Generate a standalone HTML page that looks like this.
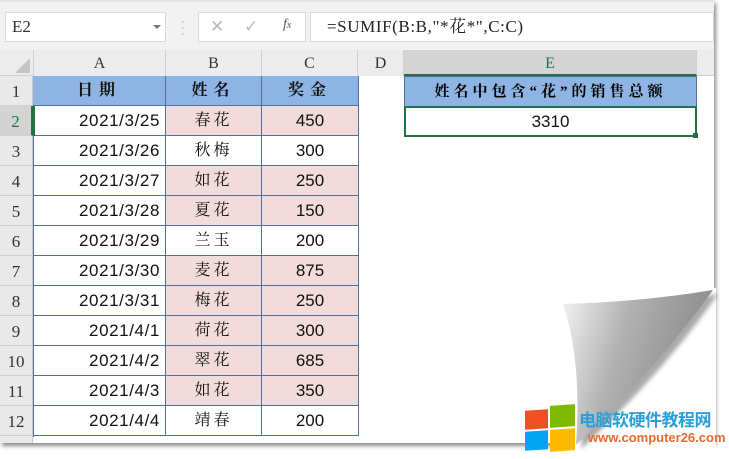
<!DOCTYPE html>
<html><head><meta charset="utf-8"><style>
*{margin:0;padding:0;box-sizing:border-box}
body{width:729px;height:459px;background:#fff;position:relative;overflow:hidden;font-family:"Liberation Sans",sans-serif}
.a{position:absolute}
.cjk{font-family:"Liberation Serif","Noto Serif CJK SC",serif}
.cell{position:absolute;height:30px;line-height:30px;font-size:16px;color:#111;border-right:1px solid #4f6f9f;border-bottom:1px solid #4f6f9f}
.rh{position:absolute;left:0;width:33px;height:30px;background:#e9e9e9;border-bottom:1px solid #d0d0d0;border-right:1px solid #c8c8c8;font-family:"Liberation Serif",serif;font-size:17px;color:#333;text-align:center;padding-top:6px}
.ch{position:absolute;top:50px;height:26px;background:#ececec;border-right:1px solid #d0d0d0;font-family:"Liberation Serif",serif;font-size:16px;color:#333;text-align:center;line-height:28px}
</style></head><body>
<div class="a" style="left:0;top:0;width:714px;height:443px;background:#fff;box-shadow:2px 3px 4px rgba(0,0,0,.45)"></div>
<div class="a" style="left:0;top:0;width:714px;height:50px;background:#f2f2f2;border-top:2px solid #e4e4e4"></div>
<div class="a" style="left:5px;top:12px;width:161px;height:30px;background:#fff;border:1px solid #dadada;font-family:'Liberation Serif',serif;font-size:17px;line-height:28px;padding-left:6px;color:#333">E2</div>
<div class="a" style="left:153px;top:25px;width:0;height:0;border-left:4px solid transparent;border-right:4px solid transparent;border-top:4px solid #777"></div>
<div class="a" style="left:181px;top:18px;color:#aaa;font-size:12px;line-height:6px">·<br>·<br>·</div>
<div class="a" style="left:198px;top:12px;width:108px;height:30px;background:#fff;border:1px solid #dadada"></div>
<div class="a" style="left:210px;top:17px;color:#bbb;font-size:17px">✕</div>
<div class="a" style="left:244px;top:17px;color:#bbb;font-size:17px">✓</div>
<div class="a" style="left:283px;top:17px;color:#555;font-size:14px;font-style:italic;font-family:'Liberation Serif',serif">f<span style="font-size:10px">x</span></div>
<div class="a" style="left:310px;top:12px;width:404px;height:30px;background:#fff;border:1px solid #dadada;font-size:17px;line-height:28px;padding-left:16px;color:#222;font-family:'Liberation Serif','Noto Serif CJK SC',serif;letter-spacing:0.6px">=SUMIF(B:B,"*花*",C:C)</div>
<div class="a" style="left:0;top:50px;width:714px;height:26px;background:#ececec;border-bottom:1px solid #cfcfcf"></div>
<div class="a" style="left:15px;top:58px;width:0;height:0;border-left:15px solid transparent;border-bottom:15px solid #c4c4c4"></div>
<div class="ch" style="left:33px;width:133px;border-left:1px solid #d0d0d0">A</div>
<div class="ch" style="left:166px;width:96px">B</div>
<div class="ch" style="left:262px;width:96px">C</div>
<div class="ch" style="left:358px;width:46px">D</div>
<div class="ch" style="left:404px;width:293px;background:#d4d4d4;border-bottom:2px solid #217346;color:#217346">E</div>
<div class="rh" style="top:76px">1</div>
<div class="rh" style="top:106px;background:#d3d3d3;color:#217346;border-right:2px solid #217346">2</div>
<div class="rh" style="top:136px">3</div>
<div class="rh" style="top:166px">4</div>
<div class="rh" style="top:196px">5</div>
<div class="rh" style="top:226px">6</div>
<div class="rh" style="top:256px">7</div>
<div class="rh" style="top:286px">8</div>
<div class="rh" style="top:316px">9</div>
<div class="rh" style="top:346px">10</div>
<div class="rh" style="top:376px">11</div>
<div class="rh" style="top:406px">12</div>
<div class="a" style="left:0;top:436px;width:33px;height:7px;background:#e9e9e9;border-right:1px solid #c8c8c8"></div>
<div class="a" style="left:33px;top:76px;width:326px;height:361px;border-left:1px solid #4f6f9f;border-top:1px solid #4f6f9f"></div>
<div class="cell cjk" style="left:33px;top:76px;width:133px;background:#8db4e2;text-align:center;font-weight:bold;letter-spacing:6px">日期</div>
<div class="cell cjk" style="left:166px;top:76px;width:96px;background:#8db4e2;text-align:center;font-weight:bold;letter-spacing:6px">姓名</div>
<div class="cell cjk" style="left:262px;top:76px;width:97px;background:#8db4e2;text-align:center;font-weight:bold;letter-spacing:6px">奖金</div>
<div id="rows"></div>
<script>
var d=[["2021/3/25","春花",450,1],["2021/3/26","秋梅",300,0],["2021/3/27","如花",250,1],["2021/3/28","夏花",150,1],["2021/3/29","兰玉",200,0],["2021/3/30","麦花",875,1],["2021/3/31","梅花",250,1],["2021/4/1","荷花",300,1],["2021/4/2","翠花",685,1],["2021/4/3","如花",350,1],["2021/4/4","靖春",200,0]];
var h="";d.forEach(function(r,i){var t=106+i*30,bg=r[3]?"#f2dcdb":"#fff";
h+='<div class="cell" style="left:33px;top:'+t+'px;width:133px;text-align:right;padding-right:5px;font-size:17px;letter-spacing:0.6px">'+r[0]+'</div>';
h+='<div class="cell cjk" style="left:166px;top:'+t+'px;width:96px;text-align:center;background:'+bg+';letter-spacing:3px">'+r[1]+'</div>';
h+='<div class="cell" style="left:262px;top:'+t+'px;width:97px;text-align:center;background:'+bg+';font-size:17px">'+r[2]+'</div>';});
document.getElementById("rows").innerHTML=h;
</script>
<div class="a" style="left:33px;top:106px;width:2px;height:30px;background:#217346"></div>
<div class="a cjk" style="left:404px;top:76px;width:293px;height:31px;background:#8db4e2;border:1px solid #4f6f9f;text-align:center;line-height:30px;font-size:15px;font-weight:bold;letter-spacing:4px">姓名中包含“花”的销售总额</div>
<div class="a" style="left:404px;top:106px;width:293px;height:31px;border:2px solid #217346;text-align:center;line-height:27px;font-size:17px;color:#111">3310</div>
<div class="a" style="left:693px;top:133px;width:5px;height:5px;background:#217346"></div>
<svg class="a" style="left:0;top:0" width="729" height="459">
<defs><linearGradient id="g" x1="0" y1="0" x2="1" y2="0.3"><stop offset="0" stop-color="#f4f4f4"/><stop offset="0.45" stop-color="#b0b0b0"/><stop offset="1" stop-color="#8a8a8a"/></linearGradient>
<filter id="s"><feGaussianBlur stdDeviation="2"/></filter></defs>
<path d="M560 305 L716 288 L716 459 L560 459 Z" fill="#fff"/>
<path d="M565 306 Q640 304 715 291 Q660 370 578 446 Q585 360 565 306 Z" fill="#555" opacity=".5" filter="url(#s)" transform="translate(3,3)"/>
<path d="M563 304 Q640 302 713 290 Q655 370 576 445 Q582 360 563 304 Z" fill="url(#g)"/>
</svg>
<div class="a" style="left:525px;top:410px;width:23px;height:19px;background:#f25022;transform:skewY(-4deg)"></div>
<div class="a" style="left:550px;top:405px;width:25px;height:22px;background:#7fba00;transform:skewY(-4deg)"></div>
<div class="a" style="left:525px;top:431px;width:23px;height:19px;background:#00a4ef;transform:skewY(-4deg)"></div>
<div class="a" style="left:550px;top:429px;width:25px;height:22px;background:#ffb900;transform:skewY(-4deg)"></div>
<div class="a" style="left:579px;top:406px;font-family:'Noto Sans CJK SC',sans-serif;font-weight:bold;font-size:17px;color:#2a9fd8;letter-spacing:-0.5px;white-space:nowrap">电脑软硬件教程网</div>
<div class="a" style="left:588px;top:430px;font-weight:bold;font-size:13px;color:#e8692e;white-space:nowrap">www.computer26.com</div>
</body></html>
